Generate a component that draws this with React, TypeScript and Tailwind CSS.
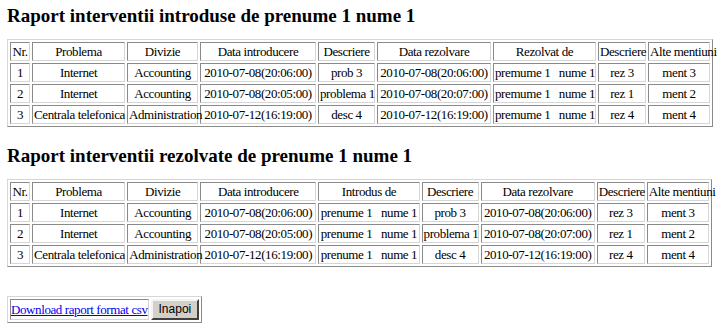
import React from 'react';

type Row = string[];
type Report = { head: string[]; widths: string[]; rows: Row[] };

const introduse: Report = {
  head: ['Nr.', 'Problema', 'Divizie', 'Data introducere', 'Descriere', 'Data rezolvare', 'Rezolvat de', 'Descriere', 'Alte mentiuni'],
  widths: ['w-[20px]', 'w-[93px]', 'w-[71px]', 'w-[116px]', 'w-[57px]', 'w-[114px]', 'w-[103px]', 'w-[48px]', 'w-[62px]'],
  rows: [
    ['1', 'Internet', 'Accounting', '2010-07-08(20:06:00)', 'prob 3', '2010-07-08(20:06:00)', 'premume 1   nume 1', 'rez 3', 'ment 3'],
    ['2', 'Internet', 'Accounting', '2010-07-08(20:05:00)', 'problema 1', '2010-07-08(20:07:00)', 'premume 1   nume 1', 'rez 1', 'ment 2'],
    ['3', 'Centrala telefonica', 'Administration', '2010-07-12(16:19:00)', 'desc 4', '2010-07-12(16:19:00)', 'premume 1   nume 1', 'rez 4', 'ment 4'],
  ],
};

const rezolvate: Report = {
  head: ['Nr.', 'Problema', 'Divizie', 'Data introducere', 'Introdus de', 'Descriere', 'Data rezolvare', 'Descriere', 'Alte mentiuni'],
  widths: ['w-[20px]', 'w-[93px]', 'w-[71px]', 'w-[116px]', 'w-[101px]', 'w-[57px]', 'w-[114px]', 'w-[48px]', 'w-[62px]'],
  rows: [
    ['1', 'Internet', 'Accounting', '2010-07-08(20:06:00)', 'prenume 1   nume 1', 'prob 3', '2010-07-08(20:06:00)', 'rez 3', 'ment 3'],
    ['2', 'Internet', 'Accounting', '2010-07-08(20:05:00)', 'prenume 1   nume 1', 'problema 1', '2010-07-08(20:07:00)', 'rez 1', 'ment 2'],
    ['3', 'Centrala telefonica', 'Administration', '2010-07-12(16:19:00)', 'prenume 1   nume 1', 'desc 4', '2010-07-12(16:19:00)', 'rez 4', 'ment 4'],
  ],
};

// old-school border="1" look: outset table, inset cells
const tableCls =
  'border-separate border-spacing-[2px] border border-t-[#d6d6d6] border-l-[#d6d6d6] border-b-[#8a8a8a] border-r-[#8a8a8a]';
const cellCls =
  "border border-t-[#8a8a8a] border-l-[#8a8a8a] border-b-[#d6d6d6] border-r-[#d6d6d6] px-px py-px text-center whitespace-pre font-normal text-[13px] leading-[15px] tracking-[-0.4px] [font-family:'Liberation_Serif']";

function ReportTable({ title, data }: { title: string; data: Report }) {
  return (
    <div>
      <h3 className="text-[19px] font-bold leading-[22px] mb-[12px] [font-family:'Liberation_Serif']">{title}</h3>
      <table className={`${tableCls} table-fixed w-[705px]`}>
        <colgroup>
          {data.widths.map((w, i) => (
            <col key={i} className={w} />
          ))}
        </colgroup>
        <thead>
          <tr>
            {data.head.map((h, i) => (
              <th key={i} className={cellCls}>{h}</th>
            ))}
          </tr>
        </thead>
        <tbody>
          {data.rows.map((r, i) => (
            <tr key={i}>
              {r.map((c, j) => (
                <td key={j} className={cellCls}>{c}</td>
              ))}
            </tr>
          ))}
        </tbody>
      </table>
    </div>
  );
}

export default function App() {
  return (
    <div className="bg-white w-[728px] h-[330px] overflow-hidden px-[7px] pt-[5px] text-black text-[13px] [font-family:'Liberation_Serif']">
      <ReportTable title="Raport interventii introduse de prenume 1 nume 1" data={introduse} />
      <div className="mt-[18px]">
        <ReportTable title="Raport interventii rezolvate de prenume 1 nume 1" data={rezolvate} />
      </div>
      <table className={`${tableCls} mt-[29px]`}>
        <tbody>
          <tr>
            <td className={`${cellCls} !px-0`}>
              <a href="#" className="text-[#0000ee] underline text-[13px] tracking-[-0.4px] [font-family:'Liberation_Serif']">
                Download raport format csv
              </a>
            </td>
            <td className="p-0">
              <button
                type="button"
                className="bg-[#d4d0c8] px-[6px] h-[21px] text-[12px] leading-[15px] text-black [font-family:'Liberation_Sans'] border-2 border-t-[#f4f4f4] border-l-[#f4f4f4] border-b-[#404040] border-r-[#404040]"
              >
                Inapoi
              </button>
            </td>
          </tr>
        </tbody>
      </table>
    </div>
  );
}
